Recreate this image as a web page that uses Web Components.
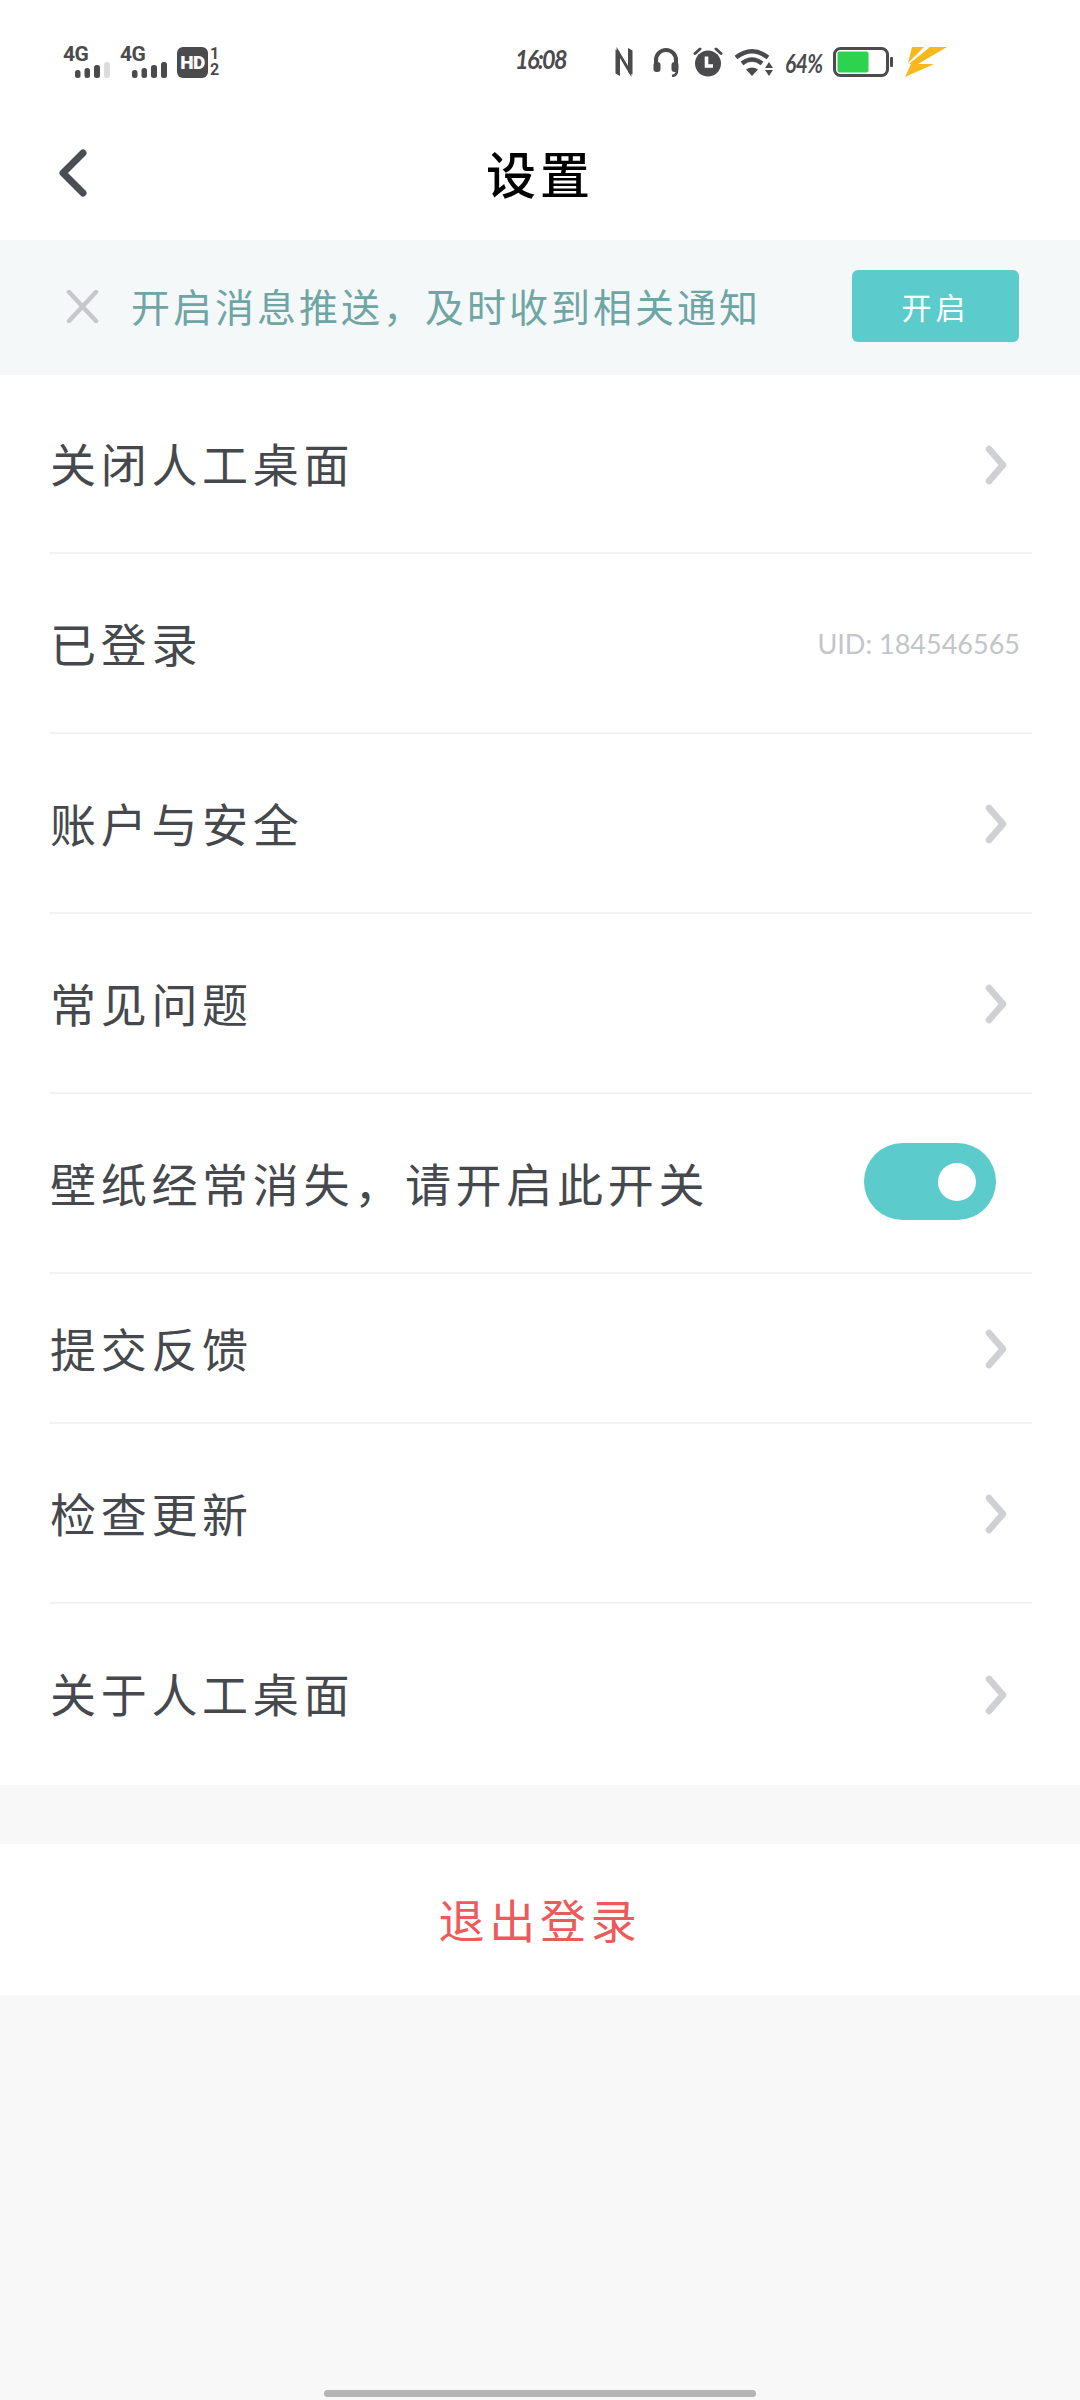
<!DOCTYPE html>
<html lang="zh">
<head>
<meta charset="utf-8">
<title>设置</title>
<style>
html, body { margin: 0; padding: 0; }
body {
  width: 1080px;
  height: 2400px;
  overflow: hidden;
  background: #f8f8f8;
  display: flex;
  flex-direction: column;
  font-family: "Noto Sans CJK SC", "Noto Sans", sans-serif;
}
</style>
</head>
<body>
<status-bar></status-bar>
<nav-bar>设置</nav-bar>
<notice-banner action="开启">开启消息推送&#xFF0C;及时收到相关通知</notice-banner>
<settings-list>
  <setting-row height="179" chevron>关闭人工桌面</setting-row>
  <setting-row height="180">已登录<span slot="end" style="margin-right:12px;color:#c2c5c9;font:27px Lato,sans-serif;letter-spacing:0">UID: 184546565</span></setting-row>
  <setting-row height="180" chevron>账户与安全</setting-row>
  <setting-row height="180" chevron>常见问题</setting-row>
  <setting-row height="180">壁纸经常消失&#xFF0C;请开启此开关<toggle-switch slot="end" on></toggle-switch></setting-row>
  <setting-row height="150" chevron>提交反馈</setting-row>
  <setting-row height="180" chevron>检查更新</setting-row>
  <setting-row height="181" chevron last>关于人工桌面</setting-row>
</settings-list>
<logout-button>退出登录</logout-button>
<home-indicator></home-indicator>

<script>
// Status bar: signal, clock and system icons. All drawn by hand to match the phone.
class StatusBar extends HTMLElement {
    constructor() {
        super();
        this.attachShadow({mode: "open"});
        const bars = (last) => `
          <svg class="bars" width="35" height="16" viewBox="0 0 35 16">
            <rect x="0" y="8" width="5.5" height="8" rx="2.5" fill="#4b4b4d"/>
            <rect x="9.5" y="6" width="5.5" height="10" rx="2.5" fill="#4b4b4d"/>
            <rect x="19" y="3" width="6" height="13" rx="2.5" fill="#4b4b4d"/>
            <rect x="29" y="0" width="6" height="16" rx="2.5" fill="${last}"/>
          </svg>`;
        this.shadowRoot.innerHTML = `
<style>
:host {
  display: grid;
  grid-template-columns: minmax(0, 1fr) auto minmax(0, 1fr);
  height: 106px;
  box-sizing: border-box;
  padding-top: 46px;
  background: #fff;
  color: #4b4b4d;
}
.left, .right { display: flex; align-items: flex-start; }
.left { padding-left: 63px; }
.right { justify-content: flex-end; padding-right: 133px; }
.sim { position: relative; width: 46px; height: 32px; margin-right: 11px; }
.sim b { display: block; font: 700 21px/17px Roboto, sans-serif; letter-spacing: -0.5px; }
.sim .bars { position: absolute; left: 12px; top: 16px; }
.hd {
  width: 31px; height: 31px; margin: 1px 1px 0 0;
  border-radius: 6px; background: #4b4b4d; color: #fff;
  font: 900 19px/31px Roboto, sans-serif; text-align: center; letter-spacing: -0.5px;
}
.frac { font: 700 16px/16px Roboto, sans-serif; text-align: center; width: 11px; margin-top: 0; }
.frac span { display: block; }
.time {
  width: 51px; white-space: nowrap;
  font: italic 700 27px/30px Lato, sans-serif; letter-spacing: -2px;
  transform: translateY(-2px) scaleX(.87); transform-origin: left center;
}
svg { display: block; flex: none; }
.pct {
  width: 37px; white-space: nowrap;
  font: italic 700 26px/30px Lato, sans-serif; letter-spacing: -0.5px;
  margin: 2px 11px 0 12px;
  transform: scaleX(.8); transform-origin: left center;
}
</style>
<div class="left">
  <div class="sim"><b>4G</b>${bars("#dddddd")}</div>
  <div class="sim"><b>4G</b>${bars("#4b4b4d")}</div>
  <div class="hd">HD</div>
  <div class="frac"><span>1</span><span>2</span></div>
</div>
<div class="time">16:08</div>
<div class="right">
  <svg width="18" height="30" viewBox="0 0 18 30" style="margin-right:20px;margin-top:1px">
    <path d="M3 27V5L15 25V3" fill="none" stroke="#4b4b4d" stroke-width="2.800"/>
    <path d="M0.500 2.500L5 5V29L0.500 26.500ZM17.500 27.500L13 25V1L17.500 3.500Z" fill="#4b4b4d"/>
  </svg>
  <svg width="26" height="30" viewBox="0 0 26 30" style="margin-right:14px;margin-top:1px">
    <path d="M3 18V13a10 10 0 0 1 20 0v5" fill="none" stroke="#4b4b4d" stroke-width="4"/>
    <rect x="0.500" y="15" width="7" height="10" rx="3" fill="#4b4b4d"/>
    <rect x="18.500" y="15" width="7" height="10" rx="3" fill="#4b4b4d"/>
    <path d="M24 24c0 3-2 4.500-5 5" fill="none" stroke="#4b4b4d" stroke-width="2.600"/>
  </svg>
  <svg width="30" height="30" viewBox="0 0 30 30" style="margin-right:11px;margin-top:1px">
    <circle cx="15" cy="16.500" r="13" fill="#4b4b4d"/>
    <path d="M2 6.500L7 2M28 6.500L23 2" stroke="#4b4b4d" stroke-width="3" stroke-linecap="round"/>
    <path d="M13.500 9.500V19H20" fill="none" stroke="#fff" stroke-width="3.600"/>
  </svg>
  <svg width="39" height="30" viewBox="0 0 39 30" style="margin-top:2px">
    <path d="M2 9.500Q18 -3 34 9.500" fill="none" stroke="#4b4b4d" stroke-width="4.500"/>
    <path d="M8 15.500Q18 7.500 28 15.500" fill="none" stroke="#4b4b4d" stroke-width="4.500"/>
    <path d="M12 21.500Q18 17.500 24 21.500L18 28Z" fill="#4b4b4d"/>
    <path d="M31 20L35 14L39 20ZM31 22L39 22L35 28Z" fill="#4b4b4d"/>
  </svg>
  <div class="pct">64%</div>
  <svg width="60" height="30" viewBox="0 0 60 30" style="margin-top:1px">
    <rect x="1.500" y="1.500" width="53" height="27" rx="6" fill="#fff" stroke="#4b4b4d" stroke-width="3"/>
    <rect x="4.500" y="4.500" width="31" height="21" rx="2" fill="#2dd24e"/>
    <rect x="57" y="10" width="3" height="10" rx="1" fill="#4b4b4d"/>
  </svg>
  <svg width="42" height="32" viewBox="0 0 42 32" style="margin:0 0 0 12px">
    <path d="M7 1H19L3 17Z" fill="#f6b81a"/>
    <path d="M25 1H42L13 18H4Z" fill="#f6b81a"/>
    <path d="M6 18H29L0 31Z" fill="#f6b81a"/>
  </svg>
</div>`;
    }
}
customElements.define("status-bar", StatusBar);

class NavBar extends HTMLElement {
    constructor() {
        super();
        this.attachShadow({mode: "open"});
        this.shadowRoot.innerHTML = `
<style>
:host {
  display: grid;
  grid-template-columns: 1fr auto 1fr;
  align-items: center;
  height: 134px;
  padding-left: 59px;
  padding-right: 59px;
  box-sizing: border-box;
  background: #fff;
}
.title { font-size: 50px; font-weight: 500; line-height: 60px; letter-spacing: 4px; color: #000; margin-top: -2px; }
svg { display: block; }
</style>
<svg width="28" height="48" viewBox="0 0 28 48">
  <path d="M24 4L4 24L24 44" fill="none" stroke="#4a4d52" stroke-width="7" stroke-linecap="round" stroke-linejoin="round"/>
</svg>
<div class="title"><slot></slot></div>
<div></div>`;
    }
}
customElements.define("nav-bar", NavBar);

class NoticeBanner extends HTMLElement {
    constructor() {
        super();
        this.attachShadow({mode: "open"});
        this.shadowRoot.innerHTML = `
<style>
:host {
  display: flex;
  align-items: center;
  box-sizing: border-box;
  height: 135px;
  padding: 0 61px 3px 66px;
  background: #f4f8f9;
  color: #6fa5a4;
}
svg { display: block; flex: none; margin-right: 32px; }
.text { flex: 1; font-size: 39px; line-height: 50px; letter-spacing: 3px; white-space: nowrap; margin-bottom: 2px; }
button {
  width: 167px; height: 72px; padding: 0; border: 0;
  border-radius: 6px; background: #5bcccb; color: #fff;
  font: 30px/72px "Noto Sans CJK SC", sans-serif; letter-spacing: 4px;
}
</style>
<svg width="33" height="33" viewBox="0 0 33 33">
  <path d="M3 2L30 31M30 2L3 31" stroke="#c6c8cb" stroke-width="4.500" stroke-linecap="round"/>
</svg>
<div class="text"><slot></slot></div>
<button></button>`;
        this.shadowRoot.querySelector("button").textContent = this.getAttribute("action");
    }
}
customElements.define("notice-banner", NoticeBanner);

class SettingsList extends HTMLElement {
    constructor() {
        super();
        this.attachShadow({mode: "open"});
        this.shadowRoot.innerHTML = `
<style>
:host { display: block; background: #fff; }
</style>
<slot></slot>`;
    }
}
customElements.define("settings-list", SettingsList);

// One line of the list. "chevron" adds the grey arrow, "last" drops the divider,
// anything with slot="end" goes on the right.
class SettingRow extends HTMLElement {
    constructor() {
        super();
        this.attachShadow({mode: "open"});
        this.shadowRoot.innerHTML = `
<style>
:host { display: block; padding: 0 48px 0 49px; }
.row {
  display: flex;
  align-items: center;
  justify-content: space-between;
  box-sizing: border-box;
  border-bottom: 2px solid #f3f3f3;
  color: #45484c;
  font-size: 46px;
  line-height: 60px;
  letter-spacing: 4.700px;
  white-space: nowrap;
}
.row > span { margin: 0 0 3px 1px; }
:host([last]) .row { border-bottom-color: transparent; }
svg { display: none; margin: 2px 25px 0 0; }
:host([chevron]) svg { display: block; }
</style>
<div class="row">
  <span><slot></slot></span>
  <slot name="end"></slot>
  <svg width="22" height="40" viewBox="0 0 22 40">
    <path d="M4 4L18 20L4 36" fill="none" stroke="#cfd0d3" stroke-width="6.500" stroke-linecap="round" stroke-linejoin="round"/>
  </svg>
</div>`;
    }
    connectedCallback() {
        this.shadowRoot.querySelector(".row").style.height = this.getAttribute("height") + "px";
    }
}
customElements.define("setting-row", SettingRow);

class ToggleSwitch extends HTMLElement {
    constructor() {
        super();
        this.attachShadow({mode: "open"});
        this.shadowRoot.innerHTML = `
<style>
:host {
  display: flex;
  align-items: center;
  justify-content: flex-start;
  box-sizing: border-box;
  width: 132px;
  height: 77px;
  margin: -3px 36px 0 0;
  padding: 0 20px;
  border-radius: 39px;
  background: #d5d7da;
}
:host([on]) { background: #5bcccb; justify-content: flex-end; }
.knob { width: 38px; height: 38px; border-radius: 50%; background: #fff; }
</style>
<div class="knob"></div>`;
    }
}
customElements.define("toggle-switch", ToggleSwitch);

class LogoutButton extends HTMLElement {
    constructor() {
        super();
        this.attachShadow({mode: "open"});
        this.shadowRoot.innerHTML = `
<style>
:host {
  display: flex;
  align-items: center;
  justify-content: center;
  box-sizing: border-box;
  height: 151px;
  margin-top: 59px;
  padding-bottom: 4px;
  background: #fff;
  color: #ec5a5c;
  font-size: 46px;
  letter-spacing: 4.700px;
}
</style>
<slot></slot>`;
    }
}
customElements.define("logout-button", LogoutButton);

class HomeIndicator extends HTMLElement {
    constructor() {
        super();
        this.attachShadow({mode: "open"});
        this.shadowRoot.innerHTML = `
<style>
:host { display: flex; justify-content: center; margin-top: auto; padding-bottom: 3px; }
div { width: 432px; height: 7px; border-radius: 4px; background: #b5b5b5; }
</style>
<div></div>`;
    }
}
customElements.define("home-indicator", HomeIndicator);
</script>
</body>
</html>
